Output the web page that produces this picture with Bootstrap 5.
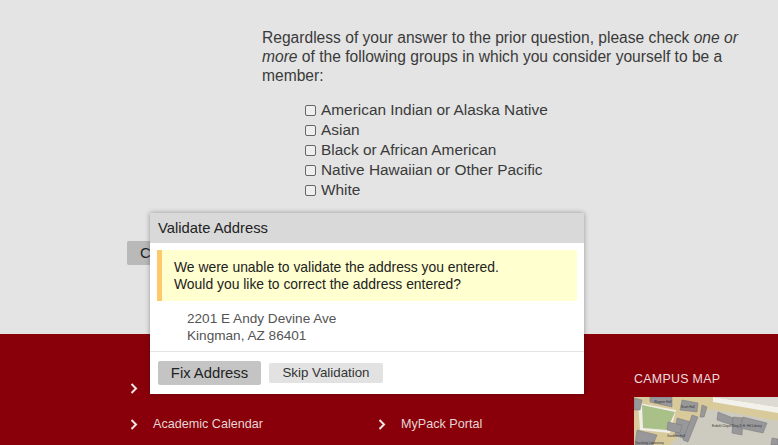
<!DOCTYPE html>
<html lang="en">
<head>
  <meta charset="UTF-8">
  <meta name="viewport" content="width=device-width, initial-scale=1">
  <title>Validate Address</title>
  <link href="https://cdn.jsdelivr.net/npm/bootstrap@5.3.0/dist/css/bootstrap.min.css" rel="stylesheet">
  <style>
    html, body { height: 445px; overflow: hidden; }
    body { font-family: "Liberation Sans", Arial, sans-serif; color: #3a3a3a; background: #e4e4e4; position: relative; }
    .form-area { height: 334px; padding: 28px 30px 0 262px; }
    .intro { font-size: 15.6px; line-height: 19px; margin: 0 0 15px; }
    .group-list { padding-left: 43px; font-size: 15.4px; line-height: 20.1px; }
    .group-item { display: flex; align-items: center; gap: 5px; }
    .box { width: 11px; height: 11px; border: 1px solid #666; border-radius: 2px; background: #eee; }
    .behind-btn { position: absolute; left: 127px; top: 241px; width: 40px; height: 24px; background: #b9b9b9; border-radius: 2px; font-size: 15px; line-height: 24px; padding-left: 13px; color: #222; }
    .site-foot { height: 111px; background: #89000a; color: #e6d5d5; display: flex; padding-left: 130px; }
    .foot-col { width: 248px; padding-top: 36px; font-size: 12.6px; }
    .foot-link { display: flex; align-items: center; height: 36px; }
    .foot-link svg { width: 8px; height: 11px; margin-right: 15px; flex: none; }
    .map-col { margin-left: 8px; padding-top: 37px; }
    .map-title { font-size: 12.4px; font-weight: 400; letter-spacing: .3px; color: #eadcdc; margin: 0 0 10px; line-height: 16px; }
    .map-pic { display: block; width: 144px; height: 48px; }
    .address-dialog { position: absolute; left: 150px; top: 213px; width: 434px; height: 180px; border: 0; border-radius: 0; box-shadow: 0 0 5px rgba(0,0,0,.35); font-size: 13.9px; }
    .address-dialog .card-header { background: #d9d9d9; border: 0; border-radius: 0; height: 30px; padding: 0 8px; line-height: 30px; color: #222; font-size: 14.8px; }
    .address-dialog .card-body { padding: 7px 7px 0; flex: none; height: 108px; }
    .warn-box { background: #ffffcf; border-left: 5px solid #fdc96c; height: 51px; padding: 9px 0 0 12px; line-height: 17px; color: #222; margin-bottom: 9px; }
    .addr { padding-left: 30px; line-height: 17px; color: #555; font-size: 13.6px; }
    .address-dialog .card-footer { background: #fff; border-top: 1px solid #e4e4e4; border-radius: 0; padding: 9px 8px; gap: 8px; }
    .fix-btn, .skip-btn { border: 0; border-radius: 2px; color: #222; padding: 0; }
    .fix-btn { background: #c4c4c4; width: 103px; height: 24px; font-size: 14.8px; }
    .skip-btn { background: #e2e2e2; width: 114px; height: 20px; margin-top: 2px; color: #333; line-height: 20px; font-size: 13.3px; }
  </style>
</head>
<body>
  <div class="form-area">
    <p class="intro">Regardless of your answer to the prior question, please check <em>one or</em> <em>more</em> of the following groups in which you consider yourself to be a member:</p>
    <div class="group-list">
      <div class="group-item"><span class="box"></span>American Indian or Alaska Native</div>
      <div class="group-item"><span class="box"></span>Asian</div>
      <div class="group-item"><span class="box"></span>Black or African American</div>
      <div class="group-item"><span class="box"></span>Native Hawaiian or Other Pacific</div>
      <div class="group-item"><span class="box"></span>White</div>
    </div>
  </div>
  <div class="behind-btn">C</div>

  <footer class="site-foot">
    <div class="foot-col">
      <div class="foot-link"><svg viewBox="0 0 8 11"><path d="M1.5 1 6 5.5 1.5 10" fill="none" stroke="#f1e6e6" stroke-width="2"/></svg></div>
      <div class="foot-link"><svg viewBox="0 0 8 11"><path d="M1.5 1 6 5.5 1.5 10" fill="none" stroke="#f1e6e6" stroke-width="2"/></svg>Academic Calendar</div>
    </div>
    <div class="foot-col">
      <div class="foot-link"></div>
      <div class="foot-link"><svg viewBox="0 0 8 11"><path d="M1.5 1 6 5.5 1.5 10" fill="none" stroke="#f1e6e6" stroke-width="2"/></svg>MyPack Portal</div>
    </div>
    <div class="map-col">
      <h6 class="map-title">CAMPUS MAP</h6>
      <svg class="map-pic" viewBox="0 0 144 48">
        <rect width="144" height="48" fill="#d9ca9c"/>
        <path d="M36 48 60 24 76 12 100 16 144 24V48z" fill="#cdcabf"/>
        <path d="M79 0 144 10V16L79 5z" fill="#f2f1ec"/>
        <path d="M79 0H144V10z" fill="#dcdad2"/>
        <path d="M4 6 42 13 36 36 6 33z" fill="#f0eee6"/>
        <path d="M8 8 41 15 33 33 9 31z" fill="#a9c088"/>
        <g fill="#98989b" stroke="#77777b" stroke-width=".5">
          <path d="M16 0H38V10L16 5z"/>
          <path d="M48 3 64 6 63 15 46 13z"/>
          <path d="M68 8 73 10 70 20 66 20z"/>
          <path d="M43 21 57 25 53 43 41 38z"/>
          <path d="M58 18 64 20 54 45 49 43z"/>
          <path d="M34 25 48 28 46 36 33 33z"/>
          <path d="M84 15 99 21 98 28 83 23z"/>
          <path d="M99 20 109 21 108 38 98 36z"/>
          <path d="M109 20 133 26 129 36 106 31z"/>
          <path d="M3 33 23 38 19 48H1z"/>
          <path d="M0 1 8 3 6 13H0z"/>
          <path d="M138 41 144 42V48H137z"/>
        </g>
        <g font-family="Liberation Sans, sans-serif" font-size="3.2" fill="#333">
          <text x="20" y="6">Wagner Hall</text>
          <text x="47" y="11">Scott Hall</text>
          <text x="78" y="30">Erdahl-Cloyd Wing D.H. Hill Library</text>
          <text x="33" y="40">Gardner Hall</text>
          <text x="1" y="46.5">Teaching Laboratory</text>
        </g>
      </svg>
    </div>
  </footer>

  <div class="card address-dialog">
    <div class="card-header">Validate Address</div>
    <div class="card-body">
      <div class="warn-box">We were unable to validate the address you entered.<br>Would you like to correct the address entered?</div>
      <div class="addr">2201 E Andy Devine Ave<br>Kingman, AZ 86401</div>
    </div>
    <div class="card-footer d-flex align-items-start">
      <button type="button" class="btn fix-btn">Fix Address</button>
      <button type="button" class="btn skip-btn">Skip Validation</button>
    </div>
  </div>
  <script src="https://cdn.jsdelivr.net/npm/bootstrap@5.3.0/dist/js/bootstrap.bundle.min.js"></script>
</body>
</html>
